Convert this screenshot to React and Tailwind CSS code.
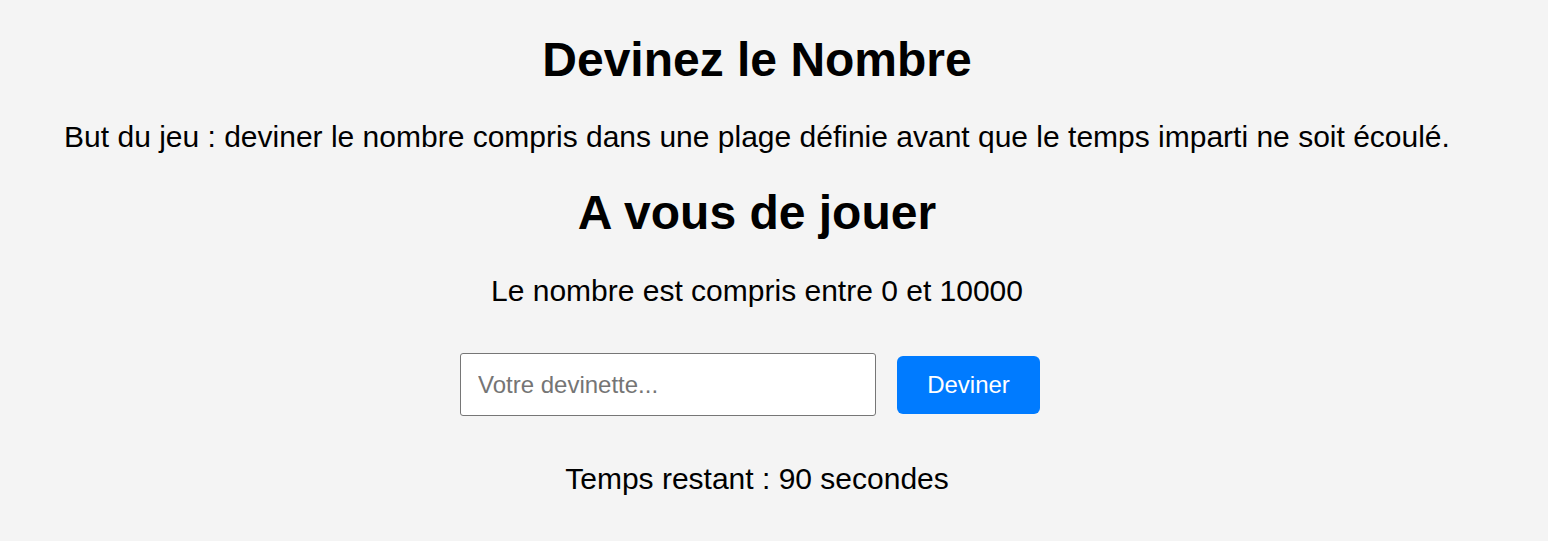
export default function App() {
  return (
    <div className="min-h-screen bg-[#f4f4f4] font-['Liberation_Sans',Arial,sans-serif] text-black">
      <div className="w-[1514px] text-center pt-[32px] pb-[40px]">
        <h1 className="text-[48px] font-bold leading-[55px]">Devinez le Nombre</h1>
        <p className="mt-[32px] text-[30px] leading-[35px]">
          But du jeu : deviner le nombre compris dans une plage définie avant que le temps imparti ne soit écoulé.
        </p>
        <h2 className="mt-[31px] text-[48px] font-bold leading-[55px]">A vous de jouer</h2>
        <p className="mt-[33px] text-[30px] leading-[35px]">Le nombre est compris entre 0 et 10000</p>
        <div className="mt-[45px] flex justify-center items-center gap-[21px] pr-[14px]">
          <input
            type="text"
            placeholder="Votre devinette..."
            className="w-[416px] h-[63px] border border-[#767676] rounded-[3px] bg-white px-[17px] text-[24px] placeholder:text-[#757575] outline-none"
          />
          <button className="w-[143px] h-[58px] bg-[#007bff] text-white text-[24px] rounded-[6px]">
            Deviner
          </button>
        </div>
        <p className="mt-[45px] text-[30px] leading-[35px]">Temps restant : 90 secondes</p>
      </div>
    </div>
  );
}
